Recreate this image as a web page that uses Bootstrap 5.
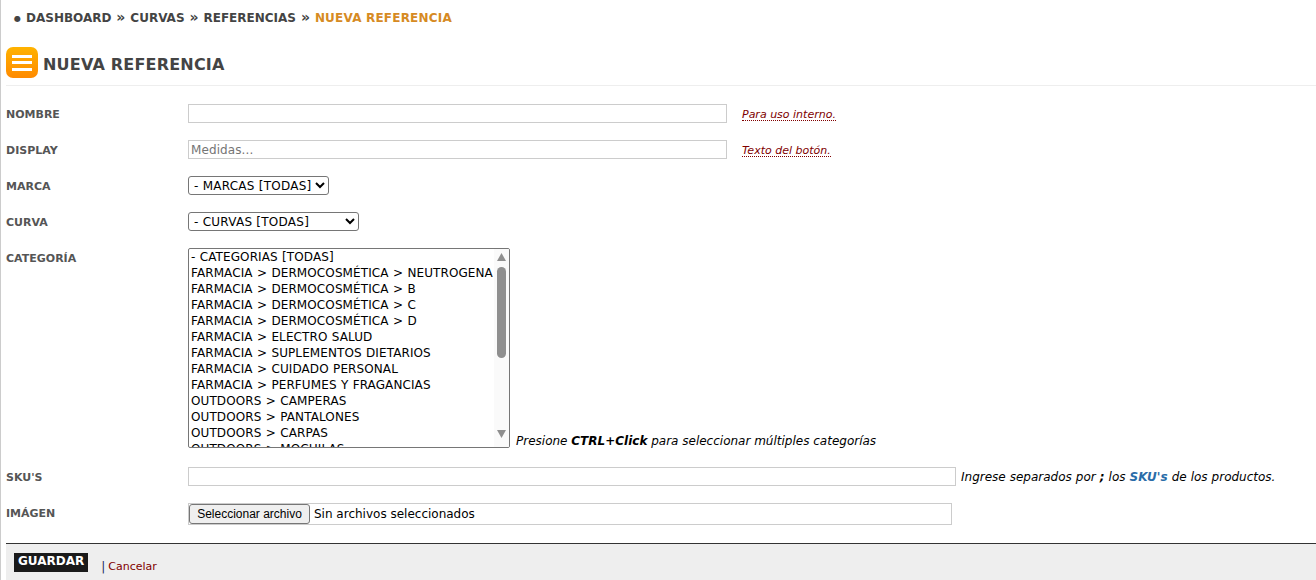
<!DOCTYPE html>
<html lang="es">
<head>
<meta charset="utf-8">
<title>Nueva referencia</title>
<link href="https://cdn.jsdelivr.net/npm/bootstrap@5.3.0/dist/css/bootstrap.min.css" rel="stylesheet">
<style>
html,body{height:100%;overflow:hidden}
body{font-family:"DejaVu Sans",Verdana,sans-serif;font-size:12px;color:#000;background:#fff;border-left:1px solid #ccc;padding-left:5px}
.crumbs{font-size:12px;font-weight:700;color:#444;padding:10px 0 0 8px;height:47px;line-height:14px}
.crumbs .cur{color:#d68a23;letter-spacing:.2px}
.crumbs .dot{font-size:8px;margin-right:5px;vertical-align:1px}
.crumbs .gt{padding:0 .75px;font-size:14px;line-height:1}
.head-row{height:39px;border-bottom:1px solid #eee;margin-bottom:18px}
.head-icon{width:32px;height:31px;border-radius:7px;background:linear-gradient(#ffb300,#ff8a00);gap:3.5px;padding:0 6px}
.head-icon i{display:block;height:3px;background:#fff}
.head-title{font-size:16px;font-weight:700;color:#444;margin:0 0 0 5px;line-height:35px;letter-spacing:.2px}
.frow{height:36px}
.flabel{width:182px;flex:none;font-size:11px;font-weight:700;color:#555;line-height:21px}
.tinput{height:19px;border:1px solid #ccc;padding:0 2px;font-size:12px;font-family:inherit;outline:0;letter-spacing:.1px}
.w-a{width:539px}
.w-b{width:768px}
.tinput::placeholder{color:#757575}
.hint{margin:5px 0 0 15px;font-size:11px;font-style:italic;color:#800000;border-bottom:1px dotted #800000;line-height:11px}
.psel{height:19px;font-family:inherit;font-size:12px;letter-spacing:.25px;border:1px solid #767676;border-radius:3px;background:#fff;color:#000;padding:0 0 0 1px}
.w-c{width:141px}
.w-d{width:171px}
.cat-row{height:219px}
.lbox{width:322px;height:200px;border:1px solid #767676;border-radius:2px;overflow:hidden;flex:none}
.lbox-items{flex:1 1 auto;min-width:0;font-size:12px;line-height:16px;letter-spacing:.1px;word-spacing:.4px;padding-left:2px;white-space:nowrap;overflow:hidden}
.sbar{width:15px;flex:none;padding:0 3px;background:#fafafa}
.sb-up{height:18px;flex:none;padding-top:4px}
.sb-down{height:17px;flex:none;padding-bottom:4px}
.sb-up svg,.sb-down svg{display:block}
.sb-thumb{height:91px;background:#8f8f8f;border-radius:5px;flex:none}
.note{font-size:12px;font-style:italic;margin:0 0 0 6px;color:#000;line-height:14px}
.note .sku{color:#2a6ca8}
.mt-note{margin-top:3px;margin-left:5px;word-spacing:.2px}
.filebox{width:764px;height:22px;border:1px solid #ccc;font-size:12px;line-height:20px}
.fbtn{font-family:"Liberation Sans",Arial,sans-serif;font-size:12px;height:20px;line-height:18px;margin:0 4px 0 0;border:1px solid #767676;border-radius:3px;background:#efefef;padding:0;width:121px;color:#000;flex:none}
.bar{background:#eee;border-top:1px solid #333;height:37px;margin-top:4px;padding:9px 0 0 8px}
.save{background:#1a1a1a;color:#fff;border:0;border-radius:0;font-family:inherit;font-weight:700;font-size:12px;line-height:14px;padding:0 4px 3px;height:19px;margin-right:13px}
.sep{font-size:12px;color:#1a2a5a;line-height:28px}
.cancel{color:#800000;font-size:11px;text-decoration:none;margin-left:3px}
</style>
</head>
<body>
<nav class="crumbs"><span class="dot">●</span>DASHBOARD <span class="gt">»</span> CURVAS <span class="gt">»</span> REFERENCIAS <span class="gt">»</span> <span class="cur">NUEVA REFERENCIA</span></nav>
<div class="head-row d-flex align-items-start">
  <div class="head-icon d-flex flex-column justify-content-center"><i></i><i></i><i></i></div>
  <h1 class="head-title">NUEVA REFERENCIA</h1>
</div>
<form>
  <div class="frow d-flex align-items-start">
    <label class="flabel">NOMBRE</label>
    <input class="tinput w-a" type="text">
    <span class="hint">Para uso interno.</span>
  </div>
  <div class="frow d-flex align-items-start">
    <label class="flabel">DISPLAY</label>
    <input class="tinput w-a" type="text" placeholder="Medidas...">
    <span class="hint">Texto del botón.</span>
  </div>
  <div class="frow d-flex align-items-start">
    <label class="flabel">MARCA</label>
    <select class="psel w-c"><option>- MARCAS [TODAS]</option></select>
  </div>
  <div class="frow d-flex align-items-start">
    <label class="flabel">CURVA</label>
    <select class="psel w-d"><option>- CURVAS [TODAS]</option></select>
  </div>
  <div class="cat-row d-flex align-items-start">
    <label class="flabel">CATEGORÍA</label>
    <div class="d-flex align-items-end">
      <div class="lbox d-flex" role="listbox" aria-multiselectable="true">
        <div class="lbox-items">
          <div>- CATEGORIAS [TODAS]</div>
          <div>FARMACIA &gt; DERMOCOSMÉTICA &gt; NEUTROGENA</div>
          <div>FARMACIA &gt; DERMOCOSMÉTICA &gt; B</div>
          <div>FARMACIA &gt; DERMOCOSMÉTICA &gt; C</div>
          <div>FARMACIA &gt; DERMOCOSMÉTICA &gt; D</div>
          <div>FARMACIA &gt; ELECTRO SALUD</div>
          <div>FARMACIA &gt; SUPLEMENTOS DIETARIOS</div>
          <div>FARMACIA &gt; CUIDADO PERSONAL</div>
          <div>FARMACIA &gt; PERFUMES Y FRAGANCIAS</div>
          <div>OUTDOORS &gt; CAMPERAS</div>
          <div>OUTDOORS &gt; PANTALONES</div>
          <div>OUTDOORS &gt; CARPAS</div>
          <div>OUTDOORS &gt; MOCHILAS</div>
        </div>
        <div class="sbar d-flex flex-column">
          <div class="sb-up"><svg width="9" height="8" viewBox="0 0 9 8"><path d="M4.5 0L9 8H0z" fill="#8f8f8f"/></svg></div>
          <div class="sb-thumb"></div>
          <div class="flex-grow-1"></div>
          <div class="sb-down"><svg width="9" height="8" viewBox="0 0 9 8"><path d="M4.5 8L9 0H0z" fill="#8f8f8f"/></svg></div>
        </div>
      </div>
      <span class="note">Presione <b>CTRL+Click</b> para seleccionar múltiples categorías</span>
    </div>
  </div>
  <div class="frow d-flex align-items-start">
    <label class="flabel">SKU'S</label>
    <input class="tinput w-b" type="text">
    <span class="note mt-note">Ingrese separados por <b>;</b> los <b class="sku">SKU's</b> de los productos.</span>
  </div>
  <div class="frow d-flex align-items-start">
    <label class="flabel">IMÁGEN</label>
    <div class="filebox d-flex align-items-center"><button type="button" class="fbtn">Seleccionar archivo</button><span>Sin archivos seleccionados</span></div>
  </div>
  <div class="bar d-flex align-items-start">
    <button type="button" class="save">GUARDAR</button>
    <span class="sep">|</span>
    <a href="#" class="cancel sep">Cancelar</a>
  </div>
</form>
<script src="https://cdn.jsdelivr.net/npm/bootstrap@5.3.0/dist/js/bootstrap.bundle.min.js"></script>
</body>
</html>
